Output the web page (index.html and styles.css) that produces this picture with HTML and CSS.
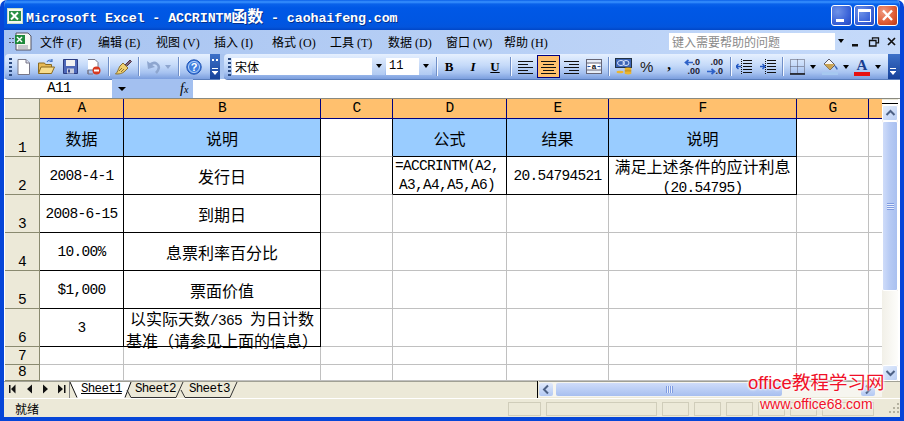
FILE: index.html
```
<!DOCTYPE html>
<html lang="zh">
<head>
<meta charset="utf-8">
<title>Microsoft Excel</title>
<link rel="stylesheet" href="styles.css">
</head>
<body>
<div class="win">
  <header class="title">
    <svg class="applogo" width="16" height="16" viewBox="0 0 16 16"><rect x=".5" y=".5" width="15" height="15" fill="#f4f8f0" stroke="#c8dcc8"/><rect x="2" y="3" width="12" height="10" fill="#2b8f46"/><path d="M4 4.500l7 7M11 4.500l-7 7" stroke="#fff" stroke-width="2"/></svg>
    <span class="title-text">Microsoft Excel - ACCRINTM<span class="tc">函数</span> - caohaifeng.com</span>
    <div class="winbtns">
      <div class="wb wb-blue"><i class="min"></i></div>
      <div class="wb wb-blue"><i class="max"></i></div>
      <div class="wb wb-red"><svg width="21" height="21" viewBox="0 0 21 21"><path d="M6 5.500l9 9.500M15 5.500l-9 9.500" stroke="#fff" stroke-width="2.400"/></svg></div>
    </div>
  </header>

  <nav class="menubar">
    <svg class="docicon" width="24" height="20" viewBox="0 0 24 20"><path d="M1 6v1M1 10v1M4 6v1M4 10v1" stroke="#334" stroke-width="1.500" stroke-dasharray="1.500 1.500"/><path d="M7 1h12l3 3v14H7z" fill="#f7f7f2" stroke="#556"/><rect x="6" y="3" width="10" height="9" fill="#1f8a3c"/><path d="M8 5l5 5M13 5l-5 5" stroke="#fff" stroke-width="1.400"/><path d="M9 14h10M9 16h10" stroke="#99a"/></svg>
    <div class="menu">
      <span class="mi">文件<b>(F)</b></span><span class="mi">编辑<b>(E)</b></span><span class="mi">视图<b>(V)</b></span><span class="mi">插入<b>(I)</b></span><span class="mi">格式<b>(O)</b></span><span class="mi">工具<b>(T)</b></span><span class="mi">数据<b>(D)</b></span><span class="mi">窗口<b>(W)</b></span><span class="mi">帮助<b>(H)</b></span>
    </div>
    <div class="helpbox"><span>键入需要帮助的问题</span><i class="helpdrop"><u class="tri"></u></i></div>
    <div class="mdi">
      <svg width="10" height="10" viewBox="0 0 10 10"><rect x="1" y="7" width="6" height="2.500" fill="#111"/></svg>
      <svg width="12" height="10" viewBox="0 0 12 10"><path d="M4.500 2.500V.8h6v5H8.500M1.500 3.500h6.500v5.500h-6.500z" fill="none" stroke="#111" stroke-width="1.300"/></svg>
      <svg width="10" height="10" viewBox="0 0 10 10"><path d="M1 1l7 7M8 1l-7 7" stroke="#111" stroke-width="1.700"/></svg>
    </div>
  </nav>

  <div class="toolbars">
    <div class="bar bar1">
      <i class="grip"></i>
      <svg class="i new" width="13" height="16" viewBox="0 0 13 16"><path d="M1 .5h8l3.500 3.500v11.500H1z" fill="#fff" stroke="#778"/><path d="M9 .5V4h3.500" fill="#dde" stroke="#778"/></svg>
      <svg class="i open" width="17" height="16" viewBox="0 0 17 16"><path d="M.5 4h6l1 1.500h6V14H.5z" fill="#e6b956" stroke="#8a6a20"/><path d="M3 8h13.500l-3 6.500H.5z" fill="#f8dd8c" stroke="#8a6a20"/><path d="M9 3q2-3 5-1.500M14 0v2.500h-2.500" fill="none" stroke="#4a78c8" stroke-width="1.200"/></svg>
      <svg class="i save" width="15" height="15" viewBox="0 0 15 15"><path d="M.5.500h14v14H.5z" fill="#4e68b8" stroke="#2c3c80"/><rect x="3" y="1" width="9" height="6" fill="#f2f2f2"/><rect x="4" y="9.500" width="7" height="5" fill="#c8cde0"/><rect x="5" y="10.500" width="2" height="3" fill="#3a4a90"/></svg>
      <svg class="i perm" width="14" height="16" viewBox="0 0 14 16"><path d="M1 .5h7l3 3V11H1v4" fill="#fff" stroke="#778"/><path d="M1 11v4h5" fill="none" stroke="#778"/><circle cx="9.500" cy="11.500" r="4" fill="#d83a20"/><rect x="7" y="10.500" width="5" height="2" fill="#fff"/></svg>
      <i class="sep s-brush"></i>
      <svg class="i brush" width="17" height="16" viewBox="0 0 17 16"><path d="M10 6L15 1l1.500 1.500-5 5z" fill="#7a6a80" stroke="#534"/><path d="M8 4l5 5-3 3c-3 3-6 3-9.500 3C3 13 3 10 5 7z" fill="#f0d070" stroke="#8a7030"/><path d="M4 12l3-3M6 13l3-3" stroke="#8a7030"/></svg>
      <i class="sep s-undo"></i>
      <svg class="i undo" width="15" height="14" viewBox="0 0 15 14"><path d="M3 6q4-5 8-2c3 2 2 6-1 9" fill="none" stroke="#8ea6cf" stroke-width="2.600"/><path d="M1 1l1 8 7-2z" fill="#8ea6cf"/></svg>
      <u class="tri t-grey t-undo"></u>
      <i class="sep s-help"></i>
      <svg class="i help" width="16" height="16" viewBox="0 0 16 16"><circle cx="8" cy="8" r="7.200" fill="#3f7fe0" stroke="#1d4fb0"/><circle cx="8" cy="8" r="5.500" fill="none" stroke="#b8d4fa"/><text x="8" y="11.500" class="qm">?</text></svg>
      <div class="chev chev1"><i class="ch-g"></i><i class="ch-d"></i></div>
    </div>
    <div class="bar bar2">
      <i class="grip"></i>
      <div class="combo c-font"><span class="c-text">宋体</span><i class="cdrop"><u class="tri"></u></i></div>
      <div class="combo c-size"><span class="c-num">11</span><i class="cdrop"><u class="tri"></u></i></div>
      <i class="sep s-b"></i>
      <span class="fmt f-b">B</span><span class="fmt f-i">I</span><span class="fmt f-u">U</span>
      <i class="sep s-al"></i>
      <svg class="i al1" width="15" height="15" viewBox="0 0 15 15"><path d="M0 2.500h15M0 5.500h10M0 8.500h15M0 11.500h10M0 14.500h15" stroke="#111"/></svg>
      <div class="sel"><svg width="15" height="15" viewBox="0 0 15 15"><path d="M0 2.500h15M2 5.500h11M0 8.500h15M2 11.500h11M0 14.500h15" stroke="#111"/></svg></div>
      <svg class="i al3" width="15" height="15" viewBox="0 0 15 15"><path d="M0 2.500h15M5 5.500h10M0 8.500h15M5 11.500h10M0 14.500h15" stroke="#111"/></svg>
      <svg class="i merge" width="16" height="15" viewBox="0 0 16 15"><rect x=".5" y=".5" width="15" height="14" fill="#e6edf8" stroke="#667"/><rect x="3" y="4" width="10" height="7" fill="#fff"/><path d="M.5 4h15M.5 11h15" stroke="#667"/><path d="M1.500 7.500h3M11.500 7.500h3" stroke="#1f4fa8"/><text x="8" y="10" class="mg">a</text></svg>
      <i class="sep s-cur"></i>
      <svg class="i cur" width="17" height="17" viewBox="0 0 17 17"><rect x=".5" y=".5" width="16" height="9" fill="#3b63b5" stroke="#234"/><ellipse cx="6" cy="5" rx="3.500" ry="2.500" fill="none" stroke="#dbe6ff"/><ellipse cx="11" cy="5" rx="3" ry="2.500" fill="none" stroke="#dbe6ff"/><ellipse cx="13" cy="11" rx="3.500" ry="1.400" fill="#eab52e"/><ellipse cx="13" cy="13" rx="3.500" ry="1.400" fill="#d09a20"/><ellipse cx="13" cy="15" rx="3.500" ry="1.400" fill="#eab52e"/><ellipse cx="5" cy="14" rx="3.500" ry="1.300" fill="#eab52e"/></svg>
      <span class="fmt f-pct">%</span><span class="fmt f-com">,</span>
      <span class="dec d-inc"><svg class="dec-ar" width="9" height="7" viewBox="0 0 9 7"><path d="M9 3.500H2M4.500 1L1.500 3.500 4.500 6" fill="none" stroke="#2f62c8" stroke-width="1.700"/></svg><span class="dec-top">.0</span><span class="dec-bot">.00</span></span>
      <span class="dec d-dec"><span class="dec-top">.00</span><svg class="dec-ar dec-low" width="9" height="7" viewBox="0 0 9 7"><path d="M0 3.500h7M4.500 1l3 2.500L4.500 6" fill="none" stroke="#2f62c8" stroke-width="1.700"/></svg><span class="dec-bot">.0</span></span>
      <i class="sep s-ind"></i>
      <svg class="i ind1" width="16" height="15" viewBox="0 0 16 15"><path d="M7 1.500h9M7 4.500h9M7 7.500h9M7 10.500h9M7 13.500h9" stroke="#111"/><path d="M5 7.500H0M2.500 5L0 7.500 2.500 10" fill="none" stroke="#1f55c0" stroke-width="1.300"/><path d="M5.500 0v15" stroke="#111" stroke-dasharray="1 1"/></svg>
      <svg class="i ind2" width="16" height="15" viewBox="0 0 16 15"><path d="M7 1.500h9M7 4.500h9M7 7.500h9M7 10.500h9M7 13.500h9" stroke="#111"/><path d="M0 7.500h5M2.500 5L5 7.500 2.500 10" fill="none" stroke="#1f55c0" stroke-width="1.300"/><path d="M5.500 0v15" stroke="#111" stroke-dasharray="1 1"/></svg>
      <i class="sep s-bd"></i>
      <svg class="i bd" width="15" height="16" viewBox="0 0 15 16"><path d="M.5.500h14v14H.5zM7.500.5v14M.5 7.500h14" fill="none" stroke="#556" stroke-dasharray="1 1"/><path d="M0 15h15" stroke="#111" stroke-width="1.500"/></svg>
      <u class="tri t-bd"></u>
      <svg class="i fill" width="16" height="17" viewBox="0 0 16 17"><path d="M7 1l6 6-5 5-6-6z" fill="#f6f6f6" stroke="#556"/><path d="M2 6h11l-5 6z" fill="#c9a352"/><path d="M13 8q2 2 2 3.500" stroke="#3d68b8" stroke-width="1.500" fill="none"/><rect x="0" y="14" width="16" height="3" fill="#a6c8f0"/></svg>
      <u class="tri t-fill"></u>
      <div class="fc"><span>A</span><i></i></div>
      <u class="tri t-fc"></u>
      <div class="chev chev2"><i class="ch-d"></i></div>
    </div>
  </div>

  <div class="formula">
    <div class="namebox"><span>A11</span></div>
    <div class="fxarea"><u class="tri"></u><em>f<small>x</small></em></div>
    <div class="fxinput"></div>
  </div>

  <div class="sheet">
    <div class="grid">
      <div class="corner"></div>
      <div class="ch">A</div><div class="ch">B</div><div class="ch">C</div><div class="ch">D</div><div class="ch">E</div><div class="ch">F</div><div class="ch">G</div><div class="ch ch-end"></div>

      <div class="rh">1</div>
      <div class="cell blk hd"><span class="z">数据</span></div>
      <div class="cell blk hd"><span class="z">说明</span></div>
      <div class="cell rb"></div>
      <div class="cell blk hd"><span class="z">公式</span></div>
      <div class="cell blk hd"><span class="z">结果</span></div>
      <div class="cell blk hd"><span class="z">说明</span></div>
      <div class="cell"></div><div class="cell end"></div>

      <div class="rh">2</div>
      <div class="cell blk">2008-4-1</div>
      <div class="cell blk"><span class="z">发行日</span></div>
      <div class="cell rb"></div>
      <div class="cell blk two formula-cell">=ACCRINTM(A2,<br>A3,A4,A5,A6)</div>
      <div class="cell blk">20.54794521</div>
      <div class="cell blk two"><span class="z">满足上述条件的应计利息</span><br>(20.54795)</div>
      <div class="cell"></div><div class="cell end"></div>

      <div class="rh">3</div>
      <div class="cell blk">2008-6-15</div>
      <div class="cell blk"><span class="z">到期日</span></div>
      <div class="cell"></div><div class="cell"></div><div class="cell"></div><div class="cell"></div><div class="cell"></div><div class="cell end"></div>

      <div class="rh">4</div>
      <div class="cell blk">10.00%</div>
      <div class="cell blk"><span class="z">息票利率百分比</span></div>
      <div class="cell"></div><div class="cell"></div><div class="cell"></div><div class="cell"></div><div class="cell"></div><div class="cell end"></div>

      <div class="rh">5</div>
      <div class="cell blk">$1,000</div>
      <div class="cell blk"><span class="z">票面价值</span></div>
      <div class="cell"></div><div class="cell"></div><div class="cell"></div><div class="cell"></div><div class="cell"></div><div class="cell end"></div>

      <div class="rh">6</div>
      <div class="cell blk">3</div>
      <div class="cell blk two"><span class="z">以实际天数</span>/365 <span class="z">为日计数</span><br><span class="z">基准（请参见上面的信息）</span></div>
      <div class="cell"></div><div class="cell"></div><div class="cell"></div><div class="cell"></div><div class="cell"></div><div class="cell end"></div>

      <div class="rh">7</div>
      <div class="cell"></div><div class="cell"></div><div class="cell"></div><div class="cell"></div><div class="cell"></div><div class="cell"></div><div class="cell"></div><div class="cell end"></div>

      <div class="rh">8</div>
      <div class="cell"></div><div class="cell"></div><div class="cell"></div><div class="cell"></div><div class="cell"></div><div class="cell"></div><div class="cell"></div><div class="cell end"></div>
    </div>
    <div class="vscroll">
      <i class="vtop"></i>
      <div class="sbtn"><svg width="11" height="8" viewBox="0 0 11 8"><path d="M1.500 6l4-4 4 4" fill="none" stroke="#4d6185" stroke-width="2"/></svg></div>
      <div class="vthumb"><i></i></div>
      <div class="vtrack"></div>
      <div class="sbtn"><svg width="11" height="8" viewBox="0 0 11 8"><path d="M1.500 2l4 4 4-4" fill="none" stroke="#4d6185" stroke-width="2"/></svg></div>
    </div>
  </div>

  <div class="tabrow">
    <div class="tabnav">
      <svg width="65" height="17" viewBox="0 0 65 17"><path d="M4 4h1.500v8H4zM10.500 3.500L6 8l4.500 4.500zM27 3.500L22 8l5 4.500zM38 3.500L43 8l-5 4.500zM53 3.500L58 8l-5 4.500zM59 4h1.500v8H59z" fill="#111"/></svg>
    </div>
    <div class="tabs">
      <svg class="tabshape" width="170" height="16" viewBox="0 0 170 16"><path d="M0 0L7 16H55L61 0z" fill="#fff"/><path d="M0 0L7 15.500M55 15.500L61 0" fill="none" stroke="#111"/><path d="M57 8L61 15.500H106L113 0M111 8L115 15.500H160L167 0" fill="none" stroke="#333"/></svg>
      <span class="tab active">Sheet1</span><span class="tab">Sheet2</span><span class="tab">Sheet3</span>
    </div>
    <div class="hsplit"></div>
    <div class="hscroll">
      <div class="hbtn"><svg width="8" height="11" viewBox="0 0 8 11"><path d="M6 1.500l-4 4 4 4" fill="none" stroke="#4d6185" stroke-width="2"/></svg></div>
      <div class="hthumb"><i></i></div>
      <div class="hbtn"><svg width="8" height="11" viewBox="0 0 8 11"><path d="M2 1.500l4 4-4 4" fill="none" stroke="#4d6185" stroke-width="2"/></svg></div>
    </div>
  </div>

  <footer class="status">
    <span class="ready">就绪</span>
    <div class="panels">
      <i class="p p1"></i><i class="p p2"></i><i class="p"></i><i class="p"></i><i class="p"></i><i class="p"></i><i class="p"></i><i class="p p8"></i>
    </div>
    <svg class="sizer" width="12" height="12" viewBox="0 0 12 12"><path d="M9 1h2v2H9zM5 5h2v2H5zM9 5h2v2H9zM1 9h2v2H1zM5 9h2v2H5zM9 9h2v2H9z" fill="#b5b2a0"/></svg>
  </footer>

  <div class="wm">
    <div class="wm1">office教程学习网</div>
    <div class="wm2">www.office68.com</div>
  </div>
</div>
</body>
</html>
```
FILE: styles.css
```
* { box-sizing: border-box; }
html, body { margin: 0; padding: 0; background: #fff; }
body { width: 904px; height: 421px; overflow: hidden; font-family: "Liberation Mono", "Noto Sans CJK SC", monospace; }
i, u, em { font-style: normal; text-decoration: none; display: block; }
svg { display: block; flex: none; }

.win { position: relative; width: 904px; height: 421px; display: flex; flex-direction: column; background: #ece9d8; border-radius: 7px 7px 0 0; overflow: hidden; border: solid #0646d8; border-width: 0 4px 4px 4px; }

/* title bar */
.title { height: 30px; margin: 0 -4px; flex: none; display: flex; align-items: center; background: linear-gradient(#0a5fe8 0, #3a93ff 2px, #0a62ea 4px, #0058e6 8px, #0056e2 22px, #0355dd 27px, #0146c6 30px); color: #fff; }
.applogo { margin: 1px 3px 0 7px; }
.title-text { font-size: 13.33px; font-weight: bold; white-space: pre; text-shadow: 1px 1px 0 #06318c; letter-spacing: -.1px; }
.tc { font-family: "Noto Sans CJK SC", sans-serif; font-size: 16px; }
.winbtns { margin-left: auto; margin-right: 6px; display: flex; gap: 2px; }
.wb { width: 21px; height: 21px; border: 1px solid #fff; border-radius: 3px; position: relative; }
.wb-blue { background: radial-gradient(circle at 30% 30%, #6f93e8, #3a63d8 60%, #2248c0); }
.wb-red { background: radial-gradient(circle at 30% 30%, #ef9a80, #df5a32 60%, #b83a18); }
.wb-red svg { margin: -1px; }
.min { position: absolute; left: 4px; bottom: 3px; width: 8px; height: 3px; background: #fff; }
.max { position: absolute; left: 3px; top: 3px; width: 13px; height: 13px; border: 1px solid #fff; border-top-width: 3px; }

/* menu */
.menubar { height: 24px; flex: none; display: flex; align-items: center; background: linear-gradient(90deg, #a7c3f0, #c5dafa); }
.docicon { margin: 0 0 0 5px; }
.menu { margin-left: 7px; display: flex; }
.mi { width: 58px; font: 12px "Noto Sans CJK SC", sans-serif; color: #000; white-space: nowrap; line-height: 18px; }
.mi b { font: 12px "Liberation Serif", serif; margin-left: 3px; }
.helpbox { margin-left: auto; width: 178px; height: 17px; background: #fff; display: flex; justify-content: space-between; font: 12px/17px "Noto Sans CJK SC", sans-serif; color: #8a8a8a; padding-left: 3px; margin-top: -2px; margin-right: 4px; }
.helpdrop { width: 12px; height: 17px; background: #c5daf9; display: flex; align-items: center; justify-content: center; }
.tri { width: 0; height: 0; border: 3.500px solid transparent; border-top: 4px solid #000; border-bottom: 0; flex: none; }
.mdi { display: flex; gap: 7px; margin-right: 3px; align-items: center; }

/* toolbars */
.toolbars { height: 25px; flex: none; display: flex; gap: 4px; padding-left: 1px; background: #a9c4ef; }
.bar { position: relative; height: 25px; display: flex; align-items: center; background: linear-gradient(#e6f0ff, #c5daf9 45%, #a6c2f0 75%, #7b9ede); border-radius: 4px 0 0 4px; box-shadow: 0 1px 0 #5a7ebc; flex: none; }
.bar1 { width: 215px; }
.bar2 { flex: 1; margin-right: 0; }
.grip { width: 3px; height: 18px; margin-left: 4px; background: repeating-linear-gradient(#2b4a80 0 2px, transparent 2px 4px); flex: none; }
.sep { width: 1px; height: 19px; background: #6f8fc8; box-shadow: 1px 0 0 #f4f8ff; flex: none; }
.bar1 .new { margin-left: 5px; }
.bar1 .open { margin-left: 8px; }
.bar1 .save { margin-left: 8px; }
.bar1 .perm { margin-left: 9px; }
.s-brush { margin-left: 7px; }
.brush { margin-left: 6px; }
.s-undo { margin-left: 6px; }
.undo { margin-left: 7px; }
.t-grey { border-top-color: #8ea6cf; margin-left: 4px; }
.s-help { margin-left: 7px; }
.help { margin-left: 7px; }
.qm { font: bold 11px "Liberation Sans", sans-serif; fill: #fff; text-anchor: middle; }
.mg { font: bold 8px "Liberation Sans", sans-serif; fill: #111; text-anchor: middle; }
.chev { position: absolute; right: 0; top: 0; bottom: 0; background: linear-gradient(#3d71c8, #16429a); }
.chev1 { width: 10px; }
.chev2 { width: 12px; }
.ch-g { position: absolute; left: 2px; top: 5px; width: 6px; height: 2px; background: repeating-linear-gradient(90deg, #fff 0 2px, transparent 2px 4px); }
.ch-d { position: absolute; left: 2px; bottom: 4px; width: 6px; height: 7px; background: linear-gradient(#fff 0 1px, transparent 1px 3px, #fff 3px 7px); clip-path: polygon(0 0, 100% 0, 100% 50%, 50% 100%, 0 50%); }

.combo { height: 17px; background: #fff; display: flex; justify-content: space-between; margin-top: -1px; }
.c-font { width: 153px; margin-left: 1px; }
.c-size { width: 46px; margin-left: 1px; }
.c-text { font: 12px/17px "Noto Sans CJK SC", sans-serif; padding-left: 3px; }
.c-num { font-size: 12px; line-height: 17px; padding-left: 3px; }
.cdrop { width: 13px; background: linear-gradient(#dbe8fc, #b0caf2); display: flex; align-items: center; justify-content: center; }
.s-b { margin-left: 4px; }
.fmt { width: 12px; flex: none; text-align: center; color: #000; font: bold 13px "Liberation Serif", serif; }
.f-b { margin-left: 6px; }
.f-i { margin-left: 12px; font-style: italic; }
.f-u { margin-left: 10px; text-decoration: underline; }
.s-al { margin-left: 9px; }
.al1 { margin-left: 7px; }
.sel { width: 23px; height: 23px; margin-left: 4px; border: 1px solid #000080; background: #ffc06e; display: flex; align-items: center; justify-content: center; }
.al3 { margin-left: 4px; }
.merge { margin-left: 7px; }
.s-cur { margin-left: 6px; }
.cur { margin-left: 6px; }
.f-pct { margin-left: 8px; font: 15px "Liberation Sans", sans-serif; width: 13px; color: #222; }
.f-com { margin-left: 12px; width: 8px; font-size: 15px; margin-top: -4px; }
.dec { position: relative; display: flex; flex-direction: column; align-items: flex-end; width: 16px; height: 18px; flex: none; font: bold 9px/9px "Liberation Sans", sans-serif; color: #223; }
.dec-top, .dec-bot { display: block; height: 9px; }
.dec-ar { position: absolute; left: 0; top: 1px; }
.dec-low { top: 10px; }
.d-inc { margin-left: 11px; }
.d-dec { margin-left: 7px; }
.s-ind { margin-left: 7px; }
.ind1 { margin-left: 5px; }
.ind2 { margin-left: 8px; }
.s-bd { margin-left: 6px; }
.bd { margin-left: 7px; }
.t-bd { margin-left: 5px; }
.fill { margin-left: 6px; }
.t-fill { margin-left: 5px; }
.fc { margin-left: 5px; width: 16px; height: 18px; position: relative; text-align: center; font: bold 15px/14px "Liberation Serif", serif; color: #1a3f90; }
.fc i { position: absolute; left: 0; bottom: 0; width: 16px; height: 4px; background: #e81010; }
.t-fc { margin-left: 5px; }

/* formula bar */
.formula { height: 20px; flex: none; display: flex; border-bottom: 1px solid #8a8a80; background: #fff; }
.namebox { width: 106px; margin-left: 2px; text-align: center; font-size: 14.5px; letter-spacing: -.7px; line-height: 19px; }
.fxarea { width: 81px; background: #a3c0f0; position: relative; }
.fxarea .tri { position: absolute; left: 6px; top: 8px; border-width: 4px; border-top-width: 4px; border-bottom: 0; }
.fxarea em { position: absolute; left: 68px; top: 1px; font: italic 14px/17px "Liberation Serif", serif; }
.fxarea small { font-size: 10px; }
.fxinput { flex: 1; }

/* grid */
.sheet { height: 282px; flex: none; display: flex; padding-left: 1px; background: #fff; }
.grid { width: 877px; display: grid; grid-template-columns: 35px 84px 197px 72px 114px 102px 188px 72px 13px; grid-template-rows: 20px repeat(6, 38px) 18px 16px; font-size: 14.5px; letter-spacing: -.7px; color: #000; }
.corner { background: #ece9d8; border-right: 1px solid #8a8a70; border-bottom: 1px solid #8a8a70; }
.ch { background: #ffc06e; border-right: 1px solid #000080; border-bottom: 1px solid #000080; text-align: center; line-height: 19px; }
.ch-end { border-right: 0; }
.rh { background: #ece9d8; border-right: 1px solid #8a8a70; border-bottom: 1px solid #8a8a70; text-align: center; display: flex; align-items: flex-end; justify-content: center; line-height: 15px; }
.cell { border-right: 1px solid #c0c0c0; border-bottom: 1px solid #c0c0c0; display: flex; align-items: center; justify-content: center; text-align: center; white-space: nowrap; line-height: 19px; padding-top: 2px; }
.end { border-right: 0; }
.rb { border-right-color: #000; }
.blk { border-color: #000; }
.hd { background: #99ccff; }
.z { font-family: "Noto Sans CJK SC", sans-serif; font-size: 16px; line-height: 19px; letter-spacing: 0; }
.two { display: block; padding-top: 0; }
.formula-cell { padding-right: 5px; }

.vscroll { width: 16px; display: flex; flex-direction: column; background: #f3f1ec; border-left: 0; }
.vtop { height: 6px; flex: none; background: linear-gradient(#ece9d8 0 1px, #fff 1px 4px, #000 4px 5px, #fff 5px); }
.sbtn { height: 16px; flex: none; display: flex; align-items: center; justify-content: center; background: linear-gradient(135deg, #e6eefc, #b8cdf4); border: 1px solid #fff; border-radius: 2px; }
.vthumb { height: 170px; flex: none; background: linear-gradient(90deg, #cfdcf9, #b6caf4 50%, #a9c0f0); border: 1px solid #fff; border-radius: 2px; display: flex; align-items: center; justify-content: center; }
.vthumb i { width: 7px; height: 7px; background: repeating-linear-gradient(#7f9be0 0 1px, #e6eefd 1px 2px); }
.vtrack { flex: 1; background: linear-gradient(90deg, #f2f0e8, #fdfdfb); }

/* tabs */
.tabrow { height: 17px; flex: none; display: flex; padding-left: 1px; background: #ece9d8; border-top: 1px solid #a0a094; }
.tabnav { width: 65px; flex: none; border-right: 1px solid #808080; margin-top: -1px; }
.tabs { position: relative; width: 467px; flex: none; display: flex; padding-left: 11px; margin-top: -1px; }
.tabshape { position: absolute; left: 0; top: 1px; }
.tab { position: relative; width: 54px; flex: none; font-size: 12.500px; letter-spacing: -.7px; line-height: 17px; height: 17px; color: #000; }
.tab.active { text-decoration: underline; }
.hsplit { width: 2px; flex: none; margin-top: -1px; background: #ece9d8; border-left: 1px solid #000; }
.hscroll { flex: 1; display: flex; justify-content: space-between; margin-right: 18px; background: #f6f5ef; padding: 1px 7px 1px 0; height: 15px; }
.hbtn { width: 14px; flex: none; display: flex; align-items: center; justify-content: center; background: linear-gradient(#e0e9fb, #b3c9f3); border-radius: 2px; }
.hthumb { width: 226px; flex: none; margin-left: 3px; margin-right: auto; background: linear-gradient(#cfdcf9, #b7cbf4 60%, #a8bfef); border-radius: 2px; display: flex; align-items: center; justify-content: center; }
.hthumb i { width: 7px; height: 7px; background: repeating-linear-gradient(90deg, #7f9be0 0 1px, #e6eefd 1px 2px); }

/* status */
.status { height: 19px; flex: none; display: flex; align-items: center; background: #ece9d8; border-top: 1px solid #fff; position: relative; }
.ready { margin-left: 11px; font: 12px "Noto Sans CJK SC", sans-serif; color: #000; }
.panels { position: absolute; left: 504px; top: 3px; display: flex; gap: 5px; }
.p { width: 27px; height: 14px; border: 1px solid #d0cdba; }
.p1 { width: 33px; }
.p2 { width: 111px; }
.p8 { width: 52px; }
.sizer { margin-left: auto; margin-right: 0; }

/* watermark */
.wm { position: absolute; left: 744px; top: 371px; width: 150px; color: #f01028; text-shadow: 0 0 3px #fff, 0 0 3px #fff, 0 0 2px #fff; }
.wm1 { font: 18.500px/24px "Liberation Sans", "Noto Sans CJK SC", sans-serif; white-space: nowrap; }
.wm2 { font: 14px/17px "Liberation Sans", sans-serif; margin: 1px 0 0 12px; white-space: nowrap; }
```
